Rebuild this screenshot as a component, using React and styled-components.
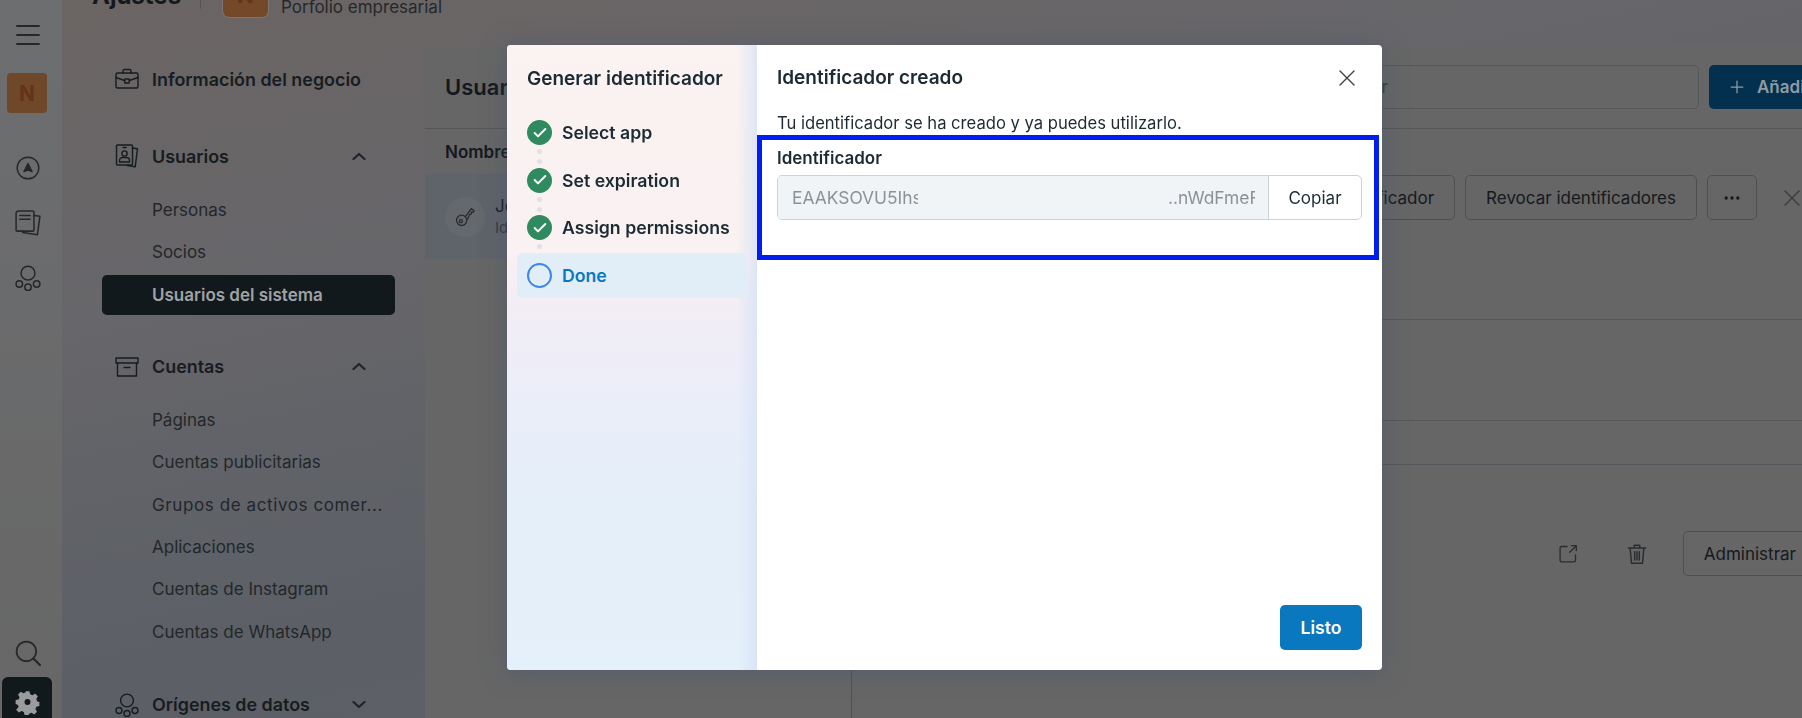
import styled, { createGlobalStyle } from "styled-components"
import { Plus, X, MoreHorizontal, Check } from "lucide-react"

const Global = createGlobalStyle`
  html, body { margin: 0; padding: 0; height: 100%; overflow: hidden; }
  body { font-family: Inter, "Noto Sans", sans-serif; background: #666; }
  * { box-sizing: border-box; }
`

const Page = styled.div`
  display: flex;
  width: 100vw;
  height: 718px;
  overflow: hidden;
  color: #14191d;
  background: linear-gradient(168deg, #6b6563 0%, #67666a 30%, #5c6066 62%, #5d6066 100%);
`

const Rail = styled.nav`
  flex: 0 0 62px;
  display: flex;
  flex-direction: column;
  align-items: flex-start;
  padding: 7px 0 0;
  background: linear-gradient(180deg, #6d6e70, #676767);
`

const RailIcon = styled.div`
  width: 55px;
  height: 55px;
  display: flex;
  align-items: center;
  justify-content: center;
  color: #25282b;
`

const RailTile = styled.div`
  width: 40px;
  height: 40px;
  margin: 11px 0 27px 7px;
  border-radius: 4px;
  background: #6e4829;
  color: #66321a;
  font-weight: 700;
  font-size: 21px;
  display: flex;
  align-items: center;
  justify-content: center;
`

const RailBottom = styled.div`
  margin-top: auto;
  display: flex;
  flex-direction: column;
`

const GearTile = styled.div`
  width: 50px;
  height: 50px;
  margin: -3px 0 -9px 2px;
  border-radius: 6px 6px 0 0;
  background: #11191d;
  color: #9a9b9c;
  display: flex;
  align-items: center;
  justify-content: center;
`

const Main = styled.div`
  flex: 0 0 1768px;
  display: flex;
  flex-direction: column;
  min-width: 0;
`

const TopBar = styled.header`
  flex: 0 0 73px;
  margin-top: -28px;
  display: flex;
  align-items: flex-start;
  padding-left: 30px;
`

const PageTitle = styled.h1`
  margin: 0;
  width: 108px;
  font-size: 24px;
  font-weight: 700;
  line-height: 48px;
`

const TopDivider = styled.div`
  width: 1px;
  height: 37px;
  background: #55565a;
  margin-right: 22px;
`

const OrgTile = styled.div`
  width: 45px;
  height: 45px;
  margin-right: 13px;
  border-radius: 6px;
  background: #74492a;
  color: #66321a;
  font-weight: 700;
  font-size: 22px;
  display: flex;
  align-items: center;
  justify-content: center;
  box-shadow: 0 0 0 1px #77777a;
`

const OrgText = styled.div`
  height: 45px;
  display: flex;
  align-items: flex-end;
  font-size: 17px;
  line-height: 20px;
  color: #24282b;
`

const Content = styled.div`
  flex: 1;
  display: flex;
  min-height: 0;
`

const Sidebar = styled.aside`
  flex: 0 0 363px;
  padding: 14px 30px 0 40px;
`

const Group = styled.section`
  margin-top: ${(p) => p.$top}px;
`

const GroupHead = styled.div`
  height: 40px;
  display: flex;
  align-items: center;
  padding: 0 29px 0 13px;
  gap: 13px;
  font-size: 17.9px;
  font-weight: 600;
  color: #171c20;

  & > span {
    flex: 1;
  }
`

const SubList = styled.div`
  margin-top: ${(p) => p.$top}px;
  display: flex;
  flex-direction: column;
  gap: 2.4px;
`

const SubItem = styled.div`
  height: 40px;
  display: flex;
  align-items: center;
  padding-left: 50px;
  border-radius: 5px;
  font-size: 17px;
  letter-spacing: ${(p) => (p.$spread ? "0.6px" : "0")};
  color: ${(p) => (p.$active ? "#a0a2a3" : "#23272a")};
  font-weight: ${(p) => (p.$active ? 600 : 400)};
  background: ${(p) => (p.$active ? "#11191d" : "transparent")};
`

const Panel = styled.main`
  flex: 1;
  min-width: 0;
  display: flex;
  flex-direction: column;
  background: #666;
  border-top-left-radius: 8px;
`

const PanelHead = styled.div`
  flex: 0 0 84px;
  display: flex;
  align-items: center;
  padding: 0 0 0 20px;
  border-bottom: 1px solid #55575b;
`

const PanelTitle = styled.h2`
  margin: 0;
  flex: 1;
  font-size: 22px;
  font-weight: 600;
  color: #12181d;
`

const SearchBox = styled.div`
  width: 619px;
  height: 44px;
  margin-right: 10px;
  padding-left: 32px;
  display: flex;
  align-items: center;
  border: 1px solid #55575b;
  border-radius: 5px;
  font-size: 17px;
  color: #34373a;
`

const AddButton = styled.div`
  flex: 0 0 121px;
  height: 44px;
  display: flex;
  align-items: center;
  gap: 10px;
  padding-left: 18px;
  border-radius: 5px;
  background: #03304f;
  color: #8f9aa2;
  font-size: 17px;
  font-weight: 600;
`

const PanelBody = styled.div`
  flex: 1;
  display: flex;
  min-height: 0;
`

const UserList = styled.div`
  flex: 0 0 427px;
  border-right: 1px solid #4e5053;
`

const ListHead = styled.div`
  height: 45px;
  display: flex;
  align-items: center;
  padding-left: 20px;
  font-size: 17px;
  font-weight: 600;
  color: #12181d;
`

const UserRow = styled.div`
  height: 85px;
  display: flex;
  align-items: center;
  gap: 10px;
  padding-left: 20px;
  background: #5f636a;
`

const KeyCircle = styled.div`
  width: 40px;
  height: 40px;
  border-radius: 50%;
  background: #65686c;
  display: flex;
  align-items: center;
  justify-content: center;
  color: #2a2d30;
`

const UserName = styled.div`
  font-size: 17px;
  line-height: 22px;
  color: #14191d;
`

const UserMeta = styled.div`
  font-size: 15px;
  line-height: 22px;
  color: #34383c;
`

const Detail = styled.div`
  flex: 1;
  min-width: 0;
`

const Toolbar = styled.div`
  height: 45px;
  margin-top: 46px;
  display: flex;
  align-items: center;
  justify-content: flex-end;
  gap: 10px;
  padding-right: 24px;
`

const GhostButton = styled.div`
  height: 45px;
  padding: 0 20px;
  display: flex;
  align-items: center;
  border: 1px solid #4d4f52;
  border-radius: 5px;
  font-size: 17px;
  color: #15191d;
  white-space: nowrap;
`

const IconButton = styled(GhostButton)`
  width: 50px;
  padding: 0;
  justify-content: center;
`

const ToolbarClose = styled.div`
  margin-left: 11px;
  display: flex;
  color: #3a3d40;
`

const DetailBlock = styled.div`
  height: ${(p) => p.$h}px;
  border-bottom: 1px solid #54565b;
`

const ActionRow = styled.div`
  margin-top: 66px;
  display: flex;
  align-items: center;
  justify-content: flex-end;
  padding-right: 13px;
  color: #2a2d30;
`

const ActionIcon = styled.div`
  display: flex;
  margin-right: ${(p) => p.$gap}px;
`

/* modal on top of the dimmed page */
const Backdrop = styled.div`
  position: fixed;
  inset: 0;
  display: flex;
  align-items: flex-start;
  padding: 45px 0 0 507px;
`

const Modal = styled.div`
  width: 875px;
  height: 625px;
  display: flex;
  background: #fff;
  border-radius: 4px;
  overflow: hidden;
  box-shadow: 0 2px 24px rgba(70, 85, 110, 0.55);
`

const StepsPane = styled.div`
  flex: 0 0 250px;
  padding: 20px 10px 0;
  background:
    linear-gradient(90deg, rgba(214, 226, 246, 0) 92%, rgba(214, 226, 246, 0.75) 100%),
    linear-gradient(180deg, #fbf2f1 0%, #f9f1f2 33%, #f3edf5 41%, #ebeef9 57%, #e4eff9 73%, #e4f0fa 100%);
`

const StepsTitle = styled.h3`
  margin: 0 0 20px 10px;
  height: 25px;
  line-height: 27px;
  font-size: 19px;
  font-weight: 600;
  color: #1c2b33;
  white-space: nowrap;
`

const StepList = styled.div`
  display: flex;
  flex-direction: column;
  gap: 2.7px;
`

const Step = styled.div`
  position: relative;
  height: 45px;
  display: flex;
  align-items: center;
  gap: 10px;
  padding-left: 10px;
  border-radius: 5px;
  font-size: 17.7px;
  font-weight: 600;
  color: ${(p) => (p.$active ? "#0a78be" : "#1c2b33")};
  background: ${(p) => (p.$active ? "#e1eef8" : "transparent")};
`

const StepDone = styled.div`
  flex: 0 0 25px;
  height: 25px;
  border-radius: 50%;
  background: #2f8a5f;
  color: #fff;
  display: flex;
  align-items: center;
  justify-content: center;
`

const StepRing = styled.div`
  flex: 0 0 25px;
  height: 25px;
  border-radius: 50%;
  border: 2.5px solid #3f86ee;
`

const Dot = styled.i`
  position: absolute;
  left: 20px;
  top: ${(p) => p.$top}px;
  width: 5px;
  height: 5px;
  border-radius: 50%;
  background: #e3dfe3;
`

const DetailPane = styled.div`
  flex: 1;
  min-width: 0;
  display: flex;
  flex-direction: column;
  padding: 20px 20px 20px 0;
`

const PaneHead = styled.div`
  height: 25px;
  display: flex;
  align-items: center;
  justify-content: space-between;
  padding: 0 1px 0 20px;
  color: #3c4348;
`

const PaneTitle = styled.h3`
  margin: 0;
  line-height: 27px;
  font-size: 19px;
  font-weight: 600;
  color: #1c2b33;
`

const PaneText = styled.p`
  margin: 23px 0 0;
  padding-left: 20px;
  line-height: 20px;
  font-size: 16.6px;
  color: #1c2b33;
`

const Highlight = styled.div`
  width: 622px;
  height: 125px;
  margin-top: 2px;
  padding: 8px 12px 0 15px;
  border: 5px solid #001ef0;
`

const FieldLabel = styled.div`
  height: 20px;
  line-height: 20px;
  font-size: 17px;
  font-weight: 600;
  color: #1c2b33;
`

const TokenField = styled.div`
  margin-top: 7px;
  height: 45px;
  display: flex;
  border: 1px solid #ccd2d8;
  border-radius: 5px;
  overflow: hidden;
`

const TokenValue = styled.div`
  flex: 1;
  display: flex;
  align-items: center;
  justify-content: space-between;
  padding: 0 13px 0 14px;
  background: #f1f4f7;
  border-right: 1px solid #ccd2d8;
  color: #8b9297;
  font-size: 17.4px;
`

const TokenPart = styled.span`
  display: block;
  width: ${(p) => p.$w}px;
  overflow: hidden;
  white-space: nowrap;
`

const CopyButton = styled.div`
  flex: 0 0 92px;
  display: flex;
  align-items: center;
  justify-content: center;
  font-size: 17px;
  color: #1c2b33;
`

const PaneFooter = styled.div`
  margin-top: auto;
  display: flex;
  justify-content: flex-end;
`

const DoneButton = styled.div`
  width: 82px;
  height: 45px;
  display: flex;
  align-items: center;
  justify-content: center;
  border-radius: 5px;
  background: #0a78be;
  color: #fff;
  font-size: 17.5px;
  font-weight: 600;
`

const Svg = ({ size = 24, sw = 1.4, children }) => (
  <svg width={size} height={size} viewBox="0 0 24 24" fill="none" stroke="currentColor" strokeWidth={sw} strokeLinecap="round" strokeLinejoin="round">
    {children}
  </svg>
)

const Hamburger = () => (
  <Svg size={24} sw={1.9}>
    <path d="M1 3h22M1 12h22M1 21h22" />
  </Svg>
)
const Compass = () => (
  <Svg>
    <circle cx="12" cy="12" r="10.8" />
    <path d="M12 7.5 16 15.5 12 14 8 15.5Z" fill="currentColor" />
  </Svg>
)
const Pages = () => (
  <Svg size={26}>
    <path d="M3 1h13.5a1 1 0 0 1 1 1v16.5a1 1 0 0 1-1 1H2a1 1 0 0 1-1-1V3a2 2 0 0 1 2-2Z" />
    <path d="M17.5 5l5.5.8-2.3 17-13.5-2-.3-1.3M4.5 5h9.5M4.5 8.5h9.5" />
  </Svg>
)
const Network = ({ size = 26 }) => (
  <Svg size={size}>
    <circle cx="12" cy="7.5" r="6.4" />
    <circle cx="4" cy="17.5" r="3" />
    <circle cx="12" cy="20.5" r="3" />
    <circle cx="20" cy="17.5" r="3" />
  </Svg>
)
const Search = () => (
  <Svg size={26} sw={1.6}>
    <circle cx="10.5" cy="10.5" r="9" />
    <path d="M17 17l6 6" strokeWidth="2" />
  </Svg>
)
const Gear = () => (
  <svg width="25" height="25" viewBox="0 0 24 24" fill="currentColor">
    <path fillRule="evenodd" d="M10 1h4l.7 3 2.3 1 2.7-1.6 2.8 2.8L20.9 9l1 2.3 2.1.7v4l-3 .7-1 2.3 1.6 2.7-2.8 2.8-2.7-1.6-2.3 1-.8 1.1h-4l-.7-3-2.3-1-2.7 1.6-2.8-2.8L3.1 17l-1-2.3L0 14v-4l3-.7 1-2.3-1.6-2.7 2.8-2.8L7.9 3l2.3-1Z M12 9a3 3 0 1 0 0 6 3 3 0 0 0 0-6Z" transform="translate(0.6 0.2) scale(0.95)" />
  </svg>
)
const Briefcase = () => (
  <Svg>
    <rect x="1" y="6" width="22" height="15" rx="1.5" />
    <path d="M8 6V4a1.5 1.5 0 0 1 1.5-1.5h5A1.5 1.5 0 0 1 16 4v2M1 10.5l8.5 3M23 10.5l-8.5 3" />
    <rect x="9.8" y="12" width="4.4" height="4" />
  </Svg>
)
const Badge = () => (
  <Svg>
    <rect x="1.5" y="1" width="16" height="20" rx="1" />
    <path d="M17.5 4l5 .8-2.3 18-8-1.3M8 3.5h3" />
    <circle cx="9.5" cy="9.5" r="2.6" />
    <path d="M4.5 18v-1.5a3 3 0 0 1 3-3h4a3 3 0 0 1 3 3V18Z" />
  </Svg>
)
const Archive = () => (
  <Svg>
    <rect x="1" y="3" width="22" height="5" />
    <path d="M2.5 8v13h19V8M9 12.5h6" />
  </Svg>
)
const Chevron = ({ up }) => (
  <svg width="14" height="9" viewBox="0 0 14 9" fill="none" stroke="#202427" strokeWidth="2.2" strokeLinecap="round" strokeLinejoin="round">
    <path d={up ? "M1.5 7 7 2l5.5 5" : "M1.5 2 7 7l5.5-5"} />
  </svg>
)
const KeyIcon = () => (
  <svg width="20" height="20" viewBox="0 0 24 24" fill="none" stroke="currentColor" strokeWidth="1.6" strokeLinejoin="round">
    <circle cx="8" cy="16" r="6.2" />
    <circle cx="7" cy="17" r="1.8" />
    <path d="M12.5 11.5 19.5 2 23 4.5 21.5 6.5 19.5 6 19.5 8.5 17.5 9 15 15" />
  </svg>
)
const ExternalIcon = () => (
  <Svg size={20} sw={1.6}>
    <path d="M11 3H4.5A2 2 0 0 0 2.5 5v14.5a2 2 0 0 0 2 2H19a2 2 0 0 0 2-2V13M14 10l8-8M16 2h6v6" />
  </Svg>
)
const TrashIcon = () => (
  <Svg size={22} sw={1.6}>
    <path d="M2.5 5.5h19M9 5.5V2.5h6v3M4.5 5.5 6 22h12l1.5-16.5M9.5 9.5v9M12 9.5v9M14.5 9.5v9" />
  </Svg>
)

function App() {
  return (
    <Page>
      <Global />
      <Rail>
        <RailIcon><Hamburger /></RailIcon>
        <RailTile>N</RailTile>
        <RailIcon><Compass /></RailIcon>
        <RailIcon><Pages /></RailIcon>
        <RailIcon><Network /></RailIcon>
        <RailBottom>
          <RailIcon><Search /></RailIcon>
          <GearTile><Gear /></GearTile>
        </RailBottom>
      </Rail>

      <Main>
        <TopBar>
          <PageTitle>Ajustes</PageTitle>
          <TopDivider />
          <OrgTile>N</OrgTile>
          <OrgText>Porfolio empresarial</OrgText>
        </TopBar>

        <Content>
          <Sidebar>
            <Group $top={0}>
              <GroupHead><Briefcase /><span>Información del negocio</span></GroupHead>
            </Group>
            <Group $top={37}>
              <GroupHead><Badge /><span>Usuarios</span><Chevron up /></GroupHead>
              <SubList $top={14}>
                <SubItem>Personas</SubItem>
                <SubItem>Socios</SubItem>
                <SubItem $active>Usuarios del sistema</SubItem>
              </SubList>
            </Group>
            <Group $top={32}>
              <GroupHead><Archive /><span>Cuentas</span><Chevron up /></GroupHead>
              <SubList $top={13}>
                <SubItem>Páginas</SubItem>
                <SubItem>Cuentas publicitarias</SubItem>
                <SubItem $spread>Grupos de activos comer...</SubItem>
                <SubItem>Aplicaciones</SubItem>
                <SubItem>Cuentas de Instagram</SubItem>
                <SubItem>Cuentas de WhatsApp</SubItem>
              </SubList>
            </Group>
            <Group $top={33}>
              <GroupHead><Network size={24} /><span>Orígenes de datos</span><Chevron /></GroupHead>
            </Group>
          </Sidebar>

          <Panel>
            <PanelHead>
              <PanelTitle>Usuarios del sistema</PanelTitle>
              <SearchBox>Buscar por nombre o identificador</SearchBox>
              <AddButton><Plus size={20} strokeWidth={1.5} />Añadir</AddButton>
            </PanelHead>
            <PanelBody>
              <UserList>
                <ListHead>Nombre</ListHead>
                <UserRow>
                  <KeyCircle><KeyIcon /></KeyCircle>
                  <div>
                    <UserName>Jose</UserName>
                    <UserMeta>Identificador</UserMeta>
                  </div>
                </UserRow>
              </UserList>
              <Detail>
                <Toolbar>
                  <GhostButton>Generar identificador</GhostButton>
                  <GhostButton>Revocar identificadores</GhostButton>
                  <IconButton><MoreHorizontal size={20} /></IconButton>
                  <ToolbarClose><X size={28} strokeWidth={1.2} /></ToolbarClose>
                </Toolbar>
                <DetailBlock $h={100} />
                <DetailBlock $h={101} />
                <DetailBlock $h={44} />
                <ActionRow>
                  <ActionIcon $gap={48}><ExternalIcon /></ActionIcon>
                  <ActionIcon $gap={35}><TrashIcon /></ActionIcon>
                  <GhostButton>Administrar</GhostButton>
                </ActionRow>
              </Detail>
            </PanelBody>
          </Panel>
        </Content>
      </Main>

      <Backdrop>
        <Modal>
          <StepsPane>
            <StepsTitle>Generar identificador</StepsTitle>
            <StepList>
              {["Select app", "Set expiration", "Assign permissions"].map((label, i) => (
                <Step key={label}>
                  <StepDone><Check size={16} strokeWidth={3} /></StepDone>
                  {label}
                  <Dot $top={39} />
                  {i < 2 && <Dot $top={49} />}
                </Step>
              ))}
              <Step $active>
                <StepRing />
                Done
              </Step>
            </StepList>
          </StepsPane>

          <DetailPane>
            <PaneHead>
              <PaneTitle>Identificador creado</PaneTitle>
              <X size={28} strokeWidth={1.2} />
            </PaneHead>
            <PaneText>Tu identificador se ha creado y ya puedes utilizarlo.</PaneText>
            <Highlight>
              <FieldLabel>Identificador</FieldLabel>
              <TokenField>
                <TokenValue>
                  <TokenPart $w={126}>EAAKSOVU5Ihs</TokenPart>
                  <TokenPart $w={87}>..nWdFmeF</TokenPart>
                </TokenValue>
                <CopyButton>Copiar</CopyButton>
              </TokenField>
            </Highlight>
            <PaneFooter>
              <DoneButton>Listo</DoneButton>
            </PaneFooter>
          </DetailPane>
        </Modal>
      </Backdrop>
    </Page>
  )
}

export default App
